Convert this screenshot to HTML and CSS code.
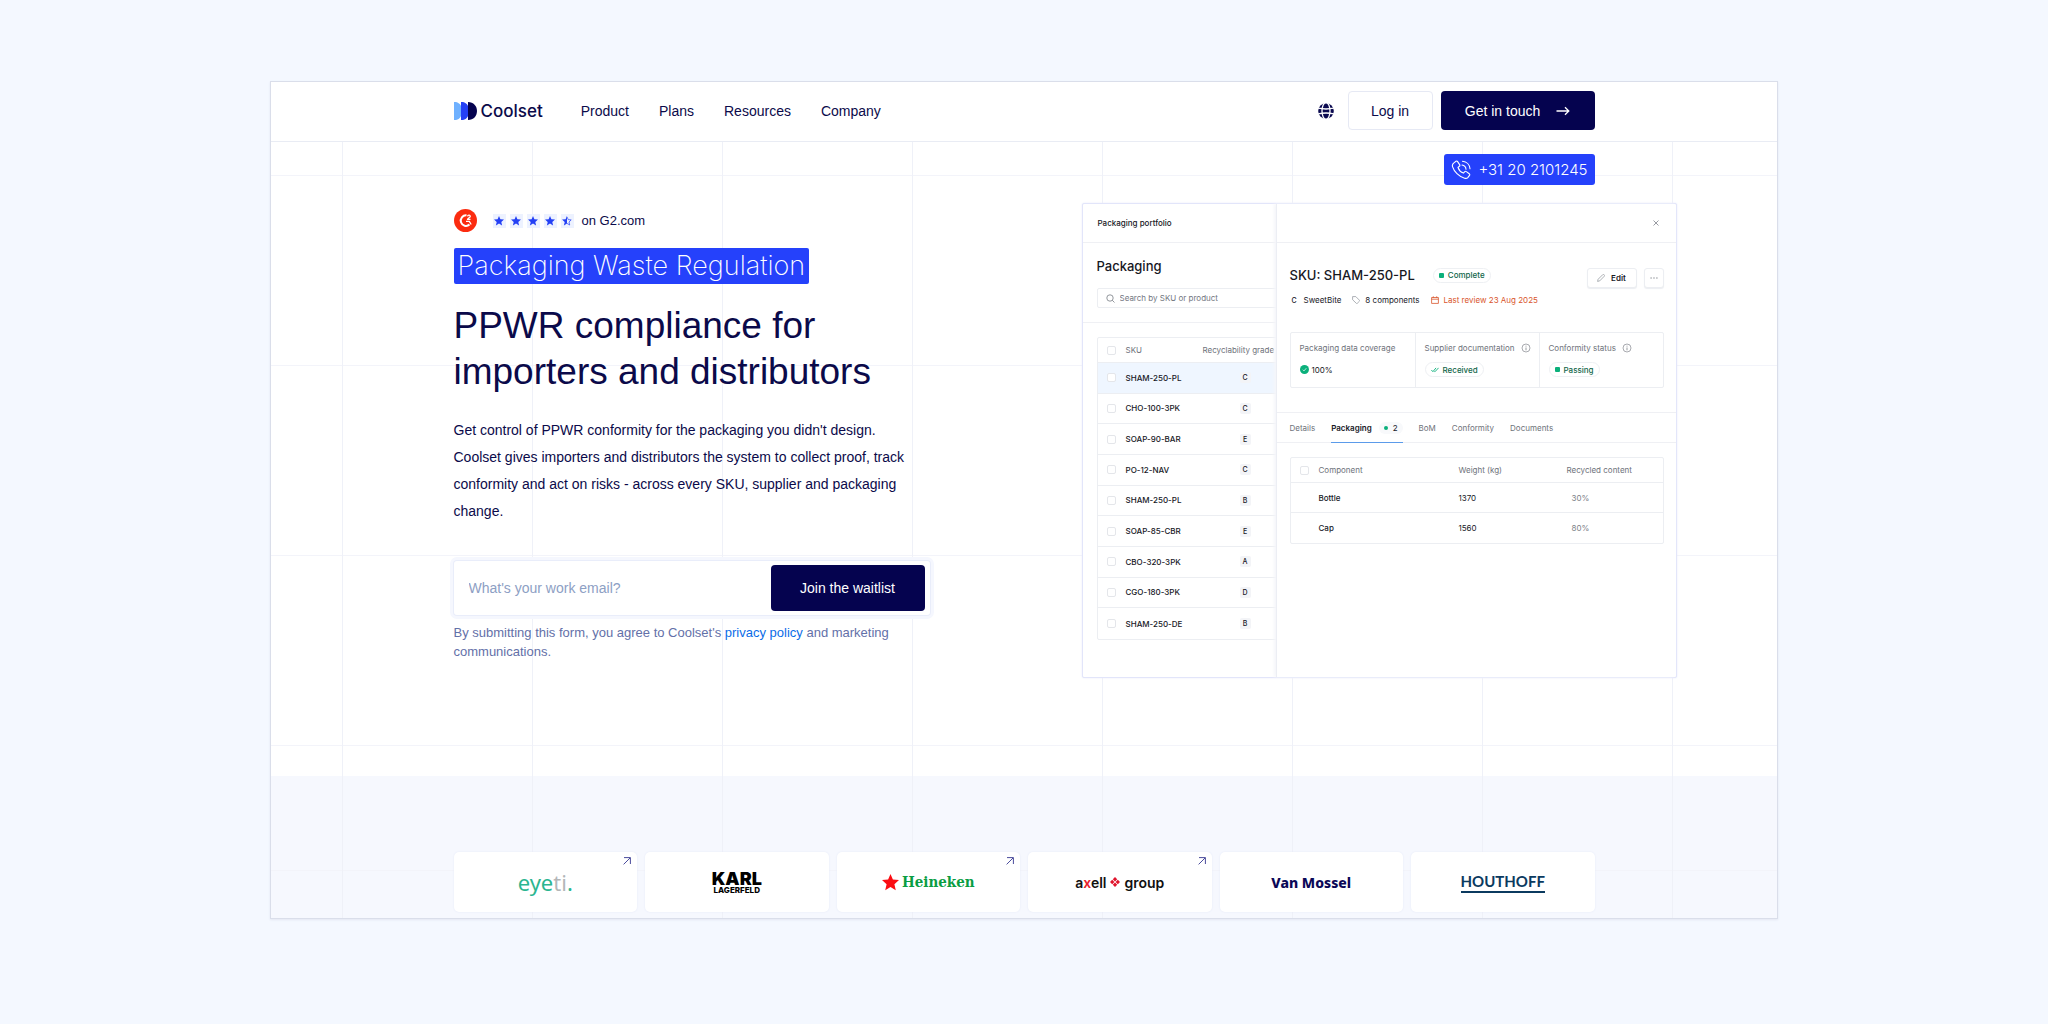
FILE: index.html
```html
<!DOCTYPE html>
<html lang="en">
<head>
<meta charset="utf-8">
<meta name="viewport" content="width=device-width, initial-scale=1">
<title>Coolset – PPWR compliance for importers and distributors</title>
<link rel="stylesheet" href="styles.css">
</head>
<body>
<svg class="sprite" aria-hidden="true">
  <symbol id="star" viewBox="0 0 10 10"><path d="M5 0l1.4 3.3 3.6.3-2.7 2.4.8 3.5L5 7.6 1.9 9.500l.8-3.500L0 3.600l3.600-.3z"/></symbol>
  <symbol id="info" viewBox="0 0 10 10"><circle cx="5" cy="5" r="4" fill="none" stroke="currentColor" stroke-width=".6"/><path d="M5 4.500V7.300M5 2.700v.9" stroke="currentColor" stroke-width=".7"/></symbol>
  <symbol id="out" viewBox="0 0 8 8"><path d="M.6 7.400L7.200.8M1 .6h6.400V7" fill="none" stroke="currentColor" stroke-width="1"/></symbol>
</svg>
<div class="frame">
  <header class="header">
    <div class="container bar">
      <a class="logo" href="#">
        <svg width="23" height="18" viewBox="0 0 23 18" aria-hidden="true"><path d="M0 0h2c4 1 6 4 6 9s-2 8-6 9H0z" fill="#6fb1ff"/><path d="M7 0h2c4 1 6 4 6 9s-2 8-6 9H7z" fill="#2440f5"/><path d="M14 0c5.500 0 9 4 9 9s-3.500 9-9 9z" fill="#05034f"/></svg>
        <span>Coolset</span>
      </a>
      <nav class="nav">
        <a href="#">Product</a><a href="#">Plans</a><a href="#">Resources</a><a href="#">Company</a>
      </nav>
      <div class="actions">
        <button class="globe" type="button" aria-label="Language">
          <svg width="16" height="16" viewBox="0 0 16 16"><circle cx="8" cy="8" r="7.800" fill="#0b0a50"/><g fill="none" stroke="#fff" stroke-width="1.300"><ellipse cx="8" cy="8" rx="4" ry="8.500"/><path d="M0 5.200c5 1 11 1 16 0M0 10.800c5-1 11-1 16 0"/></g></svg>
        </button>
        <a class="btn btn-light" href="#">Log in</a>
        <a class="btn btn-dark" href="#">Get in touch
          <svg width="14" height="10" viewBox="0 0 14 10" aria-hidden="true"><path d="M.5 5h12M9 1.300L12.800 5 9 8.700" fill="none" stroke="#fff" stroke-width="1.300"/></svg></a>
      </div>
    </div>
  </header>

  <main class="hero">
    <div class="container">
      <div class="phone-row">
        <a class="phone" href="tel:+31202101245">
          <svg width="20" height="20" viewBox="0 0 20 20" aria-hidden="true"><g fill="none" stroke="#fff" stroke-width="1.100" stroke-linecap="round" stroke-linejoin="round"><path d="M3.200 2.600L5 1.300c.6-.4 1.200-.3 1.600.3l2 3c.4.6.3 1.200-.2 1.600L7 7.500c.8 2.300 3 4.700 5.400 5.600l1.400-1.400c.5-.5 1.100-.5 1.600-.1l2.800 2.100c.6.500.7 1.100.3 1.600l-1.500 2c-.8 1-2.100 1.300-3.400.9C7.800 16.700 3.100 11.600 1.500 6.600 1 4.900 1.800 3.600 3.200 2.600z"/><path d="M11 5c2.200.3 3.800 2 4 4.200M11.500 1.200c4 .4 7.200 3.400 7.500 7.600"/></g></svg>
          +31 20 2101245</a>
      </div>
      <div class="columns">
        <section class="pitch">
          <div class="rating">
            <svg width="23" height="23" viewBox="0 0 23 23" aria-hidden="true"><circle cx="11.500" cy="11.500" r="11.500" fill="#fb2c10"/><path d="M12.500 6.300a5.300 5.300 0 1 0 3 9.300" fill="none" stroke="#fff" stroke-width="2"/><path d="M12 12.300h3.300l1.900 3.200M13.600 7.300c.2-1.600 3-1.400 2.600.3-.2 1-2.400 1.300-2.600 2.800h2.900" fill="none" stroke="#fff" stroke-width="1.300"/></svg>
            <span class="stars" role="img" aria-label="4.5 out of 5 stars">
              <i><svg><use href="#star"/></svg></i><i><svg><use href="#star"/></svg></i><i><svg><use href="#star"/></svg></i><i><svg><use href="#star"/></svg></i><i><svg viewBox="0 0 10 10"><path d="M5 0v7.600L1.900 9.500l.8-3.500L0 3.600l3.600-.3z"/><path d="M5 .8l1.200 2.800 3 .3L7 6l.7 3L5 7.400" fill="none" stroke="#2440f5" stroke-width=".7"/></svg></i>
            </span>
            <span>on G2.com</span>
          </div>
          <p class="tag">Packaging Waste Regulation</p>
          <h1>PPWR compliance for importers and distributors</h1>
          <p class="lead">Get control of PPWR conformity for the packaging you didn't design. Coolset gives importers and distributors the system to collect proof, track conformity and act on risks - across every SKU, supplier and packaging change.</p>
          <form class="signup">
            <input type="email" aria-label="Work email" placeholder="What's your work email?">
            <button class="btn-dark" type="button">Join the waitlist</button>
          </form>
          <p class="fine">By submitting this form, you agree to Coolset's <a href="#">privacy policy</a> and marketing communications.</p>
        </section>

        <section class="app" aria-label="Packaging portfolio preview">
          <div class="list">
            <div class="app-head">Packaging portfolio</div>
            <div class="list-top">
              <h2>Packaging</h2>
              <label class="search">
                <svg width="9" height="9" viewBox="0 0 9 9" aria-hidden="true"><circle cx="4" cy="4" r="3.200" fill="none" stroke="#777c84" stroke-width=".8"/><path d="M6.300 6.300L8.500 8.500" stroke="#777c84" stroke-width=".8"/></svg>
                <input type="search" aria-label="Search" placeholder="Search by SKU or product">
              </label>
            </div>
            <table class="skus">
              <thead><tr><th><input type="checkbox" aria-label="All"></th><th>SKU</th><th>Recyclability grade</th></tr></thead>
              <tbody>
                <tr class="on"><td><input type="checkbox" aria-label="Row"></td><td>SHAM-250-PL</td><td><b>C</b></td></tr>
                <tr><td><input type="checkbox" aria-label="Row"></td><td>CHO-100-3PK</td><td><b>C</b></td></tr>
                <tr><td><input type="checkbox" aria-label="Row"></td><td>SOAP-90-BAR</td><td><b>E</b></td></tr>
                <tr><td><input type="checkbox" aria-label="Row"></td><td>PO-12-NAV</td><td><b>C</b></td></tr>
                <tr><td><input type="checkbox" aria-label="Row"></td><td>SHAM-250-PL</td><td><b>B</b></td></tr>
                <tr><td><input type="checkbox" aria-label="Row"></td><td>SOAP-85-CBR</td><td><b>E</b></td></tr>
                <tr><td><input type="checkbox" aria-label="Row"></td><td>CBO-320-3PK</td><td><b>A</b></td></tr>
                <tr><td><input type="checkbox" aria-label="Row"></td><td>CGO-180-3PK</td><td><b>D</b></td></tr>
                <tr><td><input type="checkbox" aria-label="Row"></td><td>SHAM-250-DE</td><td><b>B</b></td></tr>
              </tbody>
            </table>
          </div>

          <div class="detail">
            <div class="app-head end">
              <button class="close" type="button" aria-label="Close"><svg width="6" height="6" viewBox="0 0 6 6"><path d="M.5.5l5 5M5.500.5l-5 5" stroke="#7d828a" stroke-width=".8"/></svg></button>
            </div>
            <div class="sku">
              <div>
                <div class="sku-name"><h2>SKU: SHAM-250-PL</h2><span class="pill"><i class="sq"></i>Complete</span></div>
                <div class="meta">
                  <b>C</b><span>SweetBite</span>
                  <svg width="8" height="8" viewBox="0 0 8 8" aria-hidden="true"><path d="M.6.6h3.200L7.500 4.300a.6.600 0 0 1 0 .8L5.200 7.400a.6.600 0 0 1-.8 0L.6 3.700z" fill="none" stroke="#8a8f97" stroke-width=".7"/></svg><span>8 components</span>
                  <svg width="8" height="8" viewBox="0 0 8 8" aria-hidden="true"><path d="M.6 1.500h6.800v5.900H.6zM.6 3.200h6.800M2.300.3v1.500M5.700.3v1.500" fill="none" stroke="#d9552c" stroke-width=".8"/></svg><span class="due">Last review 23 Aug 2025</span>
                </div>
              </div>
              <div class="tools">
                <button class="tool" type="button"><svg width="8" height="8" viewBox="0 0 8 8" aria-hidden="true"><path d="M.6 7.400l.5-2.100L5.700.7a.9.900 0 0 1 1.400 0l.2.2a.9.900 0 0 1 0 1.300L2.700 6.900z" fill="none" stroke="#8a8f97" stroke-width=".7"/></svg>Edit</button>
                <button class="tool more" type="button" aria-label="More"><svg width="8" height="2" viewBox="0 0 8 2"><path d="M.5 1h1.200M3.400 1h1.200M6.300 1h1.200" stroke="#6d727a"/></svg></button>
              </div>
            </div>
            <div class="stats">
              <div><p>Packaging data coverage</p><p class="val"><svg width="9" height="9" viewBox="0 0 9 9" aria-hidden="true"><circle cx="4.500" cy="4.500" r="4.500" fill="#0bb07b"/><path d="M2.800 4.700L4 5.900l2.300-2.700" fill="none" stroke="#fff" stroke-width=".7"/></svg>100%</p></div>
              <div><p>Supplier documentation <svg class="info"><use href="#info"/></svg></p><p><span class="pill"><svg width="8" height="6" viewBox="0 0 8 6" aria-hidden="true"><path d="M.4 3l1.500 1.700L5 .9M3.400 4.500l.5.300L7.600.8" fill="none" stroke="#0bb07b" stroke-width=".9"/></svg>Received</span></p></div>
              <div><p>Conformity status <svg class="info"><use href="#info"/></svg></p><p><span class="pill"><i class="sq"></i>Passing</span></p></div>
            </div>
            <nav class="tabs">
              <a href="#">Details</a><a class="current" href="#">Packaging<span class="count"><i></i>2</span></a><a href="#">BoM</a><a href="#">Conformity</a><a href="#">Documents</a>
            </nav>
            <table class="parts">
              <thead><tr><th><input type="checkbox" aria-label="All components"></th><th>Component</th><th>Weight (kg)</th><th>Recycled content</th></tr></thead>
              <tbody>
                <tr><td></td><td>Bottle</td><td>1370</td><td>30%</td></tr>
                <tr><td></td><td>Cap</td><td>1560</td><td>80%</td></tr>
              </tbody>
            </table>
          </div>
        </section>
      </div>
    </div>
  </main>

  <section class="clients" aria-label="Customers">
    <div class="container cards">
      <a class="card eyeti" href="#"><span>eye<em>ti</em>.</span><svg class="out"><use href="#out"/></svg></a>
      <div class="card karl"><span>KARL</span><small>LAGERFELD</small></div>
      <a class="card heineken" href="#"><svg width="17" height="17" viewBox="0 0 10 10" fill="#fb0d12" aria-hidden="true"><use href="#star"/></svg><span>Heineken</span><svg class="out"><use href="#out"/></svg></a>
      <a class="card axell" href="#"><span>a<em>x</em>ell</span><svg width="10" height="10" viewBox="0 0 10 10" aria-hidden="true"><path d="M5 0l2.200 2.200L5 4.400 2.800 2.200zM5 5.600l2.200 2.200L5 10 2.800 7.800zM2.200 2.800L4.400 5 2.200 7.200 0 5zM7.800 2.800L10 5 7.800 7.200 5.600 5z" fill="#e0142c"/></svg><span>group</span><svg class="out"><use href="#out"/></svg></a>
      <div class="card mossel"><span>Van Mossel</span></div>
      <div class="card houthoff"><span>HOUTHOFF</span></div>
    </div>
  </section>
</div>
</body>
</html>
```
FILE: styles.css
```css
* { box-sizing: border-box; }

body {
  margin: 0;
  min-height: 100vh;
  padding: 81px 32px;
  background: #f4f8ff;
  color: #0b0a4a;
  font-family: "Liberation Sans", Arial, sans-serif;
  font-size: 14px;
}

h1, h2, p { margin: 0; }
a { color: inherit; text-decoration: none; }
i, em { font-style: normal; }
button, input { font: inherit; color: inherit; }
svg { flex: none; }
.sprite { position: absolute; width: 0; height: 0; }

.frame {
  max-width: 1508px;
  margin: 0 auto;
  border: 1px solid #dadeea;
  background: #fff;
  box-shadow: 0 1px 2px #e3e7f2;
}

.container { max-width: 1141px; margin: 0 auto; }

/* Header */
.header { border-bottom: 1px solid #e9ecf4; }
.bar { display: flex; align-items: center; height: 59px; padding-bottom: 2px; }
.logo { display: flex; align-items: center; gap: 4px; font-family: Inter, sans-serif; font-size: 17px; font-weight: 500; }
.nav { display: flex; gap: 30px; margin-left: 38px; }
.actions { display: flex; align-items: center; gap: 8px; margin-left: auto; }
.globe { display: flex; padding: 0; margin-right: 6px; border: 0; background: none; }
.btn {
  display: flex;
  align-items: center;
  justify-content: center;
  height: 39px;
  border-radius: 4px;
}
.btn-light { width: 85px; border: 1px solid #e6e9f4; background: #fff; }
.btn-dark { border: 0; border-radius: 4px; background: #05034f; color: #fff; }
.btn.btn-dark { width: 154px; gap: 16px; }

/* Hero */
.hero, .clients {
  background-image:
    linear-gradient(to right, #eff1f8 1px, transparent 1px),
    linear-gradient(to bottom, #f3f4fa 1px, transparent 1px);
  background-size: 190px 190px;
}
.hero { background-position: 71px 33px; padding: 12px 0 98px; }
.phone-row { display: flex; justify-content: flex-end; }
.phone {
  display: flex;
  align-items: center;
  gap: 7px;
  height: 31px;
  padding: 0 7px;
  border-radius: 3px;
  background: #2541fb;
  color: #fff;
  font-family: Inter, sans-serif;
  font-size: 15px;
  font-weight: 300;
}
.columns {
  display: grid;
  grid-template-columns: 476px 595px;
  justify-content: space-between;
  margin: 18px -82px 0 0;
}

.rating { display: flex; align-items: center; margin-top: 6px; height: 23px; font-size: 13px; }
.stars { display: flex; gap: 4px; margin: 0 8px 0 16px; }
.stars i { display: grid; place-items: center; width: 13px; height: 14px; background: #edf2ff; }
.stars svg { width: 10px; height: 10px; fill: #2440f5; }
.tag {
  width: fit-content;
  margin-top: 16px;
  padding: 0 4px;
  border-radius: 2px;
  background: #2541fb;
  color: #fff;
  font-family: Inter, sans-serif;
  font-size: 27px;
  line-height: 36px;
  font-weight: 200;
}
h1 { margin-top: 19px; font-size: 37px; line-height: 46px; font-weight: 400; }
.lead { margin-top: 22px; padding-right: 8px; line-height: 27px; }
.signup {
  display: flex;
  height: 54px;
  margin-top: 36px;
  padding: 4px 5px 4px 1px;
  border-radius: 3px;
  background: #fff;
  box-shadow: 0 0 0 1px #e9edfa, 0 0 0 4px #f5f7fe;
}
.signup input { flex: 1; min-width: 0; padding: 0 14px; border: 0; background: none; outline: 0; }
.signup input::placeholder { color: #8da0c4; }
.signup .btn-dark { width: 154px; }
.fine { margin-top: 8px; color: #6370a8; font-size: 13px; line-height: 19px; }
.fine a { color: #0a6ce8; }

/* Product preview */
.app {
  display: grid;
  grid-template-columns: 193px 1fr;
  height: 475px;
  border: 1px solid #e2e5fa;
  border-radius: 2px;
  background: #fff;
  box-shadow: 0 0 2px #e6e9fb;
  color: #17181f;
  font-family: Inter, sans-serif;
  font-size: 8px;
}
.app-head {
  display: flex;
  align-items: center;
  height: 39px;
  padding-left: 15px;
  border-bottom: 1px solid #eff0f4;
  font-weight: 500;
}
.app-head.end { justify-content: flex-end; padding-right: 15px; }
.close { display: flex; padding: 2px; border: 0; background: none; }
.app h2 { font-size: 13px; line-height: 18px; font-weight: 500; }
.list { overflow: hidden; }
.list-top { height: 80px; padding: 14px 0 0 14px; border-bottom: 1px solid #eff0f4; }
.search {
  display: flex;
  align-items: center;
  gap: 5px;
  width: 300px;
  height: 20px;
  margin-top: 13px;
  padding-left: 8px;
  border: 1px solid #eceef2;
  border-radius: 2px;
}
.search input { width: 200px; padding: 0; border: 0; outline: 0; background: none; }
.search input::placeholder { color: #73777f; }

table { table-layout: fixed; border-collapse: separate; border-spacing: 0; border: 1px solid #eceef2; border-radius: 2px; }
th, td { padding: 0; border-bottom: 1px solid #eceef2; text-align: left; font-weight: 500; }
th { height: 25px; color: #6e727a; font-weight: 400; }
tr:last-child td { border-bottom: 0; }
input[type="checkbox"] {
  display: block;
  appearance: none;
  width: 9px;
  height: 9px;
  margin: 0 0 0 9px;
  border: 1px solid #e4e6ea;
  border-radius: 2px;
  background: #fff;
}
.skus { width: 300px; height: 303px; margin: 14px 0 0 14px; }
.skus th:nth-child(1) { width: 28px; }
.skus th:nth-child(2) { width: 77px; }
.skus td { height: 30px; }
.skus td:last-child { padding-left: 37px; }
.skus b { display: block; width: 11px; border-radius: 2px; background: #f3f4f7; font-size: 7px; line-height: 11px; font-weight: 500; text-align: center; }
.skus .on td { background: #eff6ff; }

.detail { border-left: 1px solid #eceef4; box-shadow: -2px 0 3px #f5f6fa; }
.sku { display: flex; justify-content: space-between; padding: 23px 12px 0 13px; }
.sku-name { display: flex; align-items: center; gap: 18px; }
.pill {
  display: inline-flex;
  align-items: center;
  gap: 4px;
  height: 15px;
  padding: 0 5px;
  border: 1px solid #eef0f3;
  border-radius: 8px;
  color: #11664a;
  font-weight: 500;
}
.sq { width: 5px; height: 5px; border-radius: 1px; background: #0bb07b; }
.meta { display: flex; align-items: center; gap: 5px; margin-top: 11px; }
.meta b { width: 9px; font-size: 7px; font-weight: 500; text-align: center; }
.meta span { margin-right: 6px; }
.meta .due { margin: 0; color: #d9552c; }
.tools { display: flex; gap: 7px; margin-top: 2px; }
.tool {
  display: flex;
  align-items: center;
  justify-content: center;
  gap: 6px;
  width: 50px;
  height: 20px;
  padding: 0;
  border: 1px solid #eceef2;
  border-radius: 3px;
  background: #fff;
  box-shadow: 0 1px 1px #eceef2;
  font-weight: 600;
}
.tool.more { width: 20px; }
.stats {
  display: grid;
  grid-template-columns: 1fr 1fr 1fr;
  height: 56px;
  margin: 27px 12px 0 13px;
  border: 1px solid #eceef2;
  border-radius: 2px;
  color: #6e727a;
}
.stats > div { padding: 9px 0 0 9px; }
.stats > div + div { border-left: 1px solid #eceef2; }
.stats p { display: flex; align-items: center; gap: 6px; height: 11px; white-space: nowrap; }
.stats p + p { height: 15px; margin-top: 9px; }
.stats .val { gap: 3px; color: #17181f; }
.info { width: 10px; height: 10px; }
.tabs {
  display: flex;
  gap: 16px;
  height: 31px;
  margin-top: 24px;
  padding-left: 13px;
  border: solid #eff0f4;
  border-width: 1px 0;
  color: #6e727a;
}
.tabs a { display: flex; align-items: center; gap: 7px; }
.tabs .current { color: #17181f; font-weight: 600; box-shadow: 0 1px #5b9bea; }
.count { display: flex; align-items: center; gap: 5px; height: 12px; padding: 0 5px; border-radius: 6px; background: #f8f9fb; font-weight: 400; }
.count i { width: 4px; height: 4px; border-radius: 50%; background: #0bb07b; }
.parts { width: calc(100% - 25px); margin: 14px 12px 0 13px; }
.parts th:nth-child(1) { width: 28px; }
.parts th:nth-child(2) { width: 140px; }
.parts th:nth-child(3) { width: 108px; }
.parts td { height: 30px; }
.parts td:nth-child(3) { font-weight: 400; }
.parts td:nth-child(4) { padding-left: 5px; color: #7d8188; font-weight: 400; }

/* Customers */
.clients { padding: 76px 0 6px; background-color: #f6f8fe; background-position: 71px 94px; }
.cards { display: grid; grid-template-columns: repeat(6, 1fr); gap: 8px; }
.card {
  position: relative;
  display: flex;
  align-items: center;
  justify-content: center;
  height: 60px;
  border-radius: 5px;
  background: #fff;
  box-shadow: 0 0 2px #e4e8f6;
  font-size: 15px;
}
.out { position: absolute; top: 5px; right: 6px; width: 8px; height: 8px; color: #4a4c9c; }
.eyeti { color: #2bb590; font-family: "Noto Sans", sans-serif; font-size: 22px; font-variant-ligatures: none; }
.eyeti em { color: #b3b6b8; }
.karl { flex-direction: column; color: #000; font-family: Inter, sans-serif; font-size: 18px; line-height: 15px; font-weight: 900; }
.karl small { font-size: 8px; line-height: 8px; font-weight: 800; }
.heineken { gap: 3px; color: #0a9d43; font-family: "DejaVu Serif Condensed", "DejaVu Serif", serif; font-weight: 700; }
.axell { gap: 4px; color: #111; font-family: Inter, sans-serif; font-size: 14px; font-weight: 600; }
.axell em { color: #e8202c; }
.mossel { color: #0b0857; font-family: "Noto Sans", sans-serif; font-size: 14px; font-weight: 800; }
.houthoff { color: #0b3a5f; font-family: Lato, sans-serif; font-weight: 700; }
.houthoff span { border-bottom: 2px solid; line-height: 20px; }
```
